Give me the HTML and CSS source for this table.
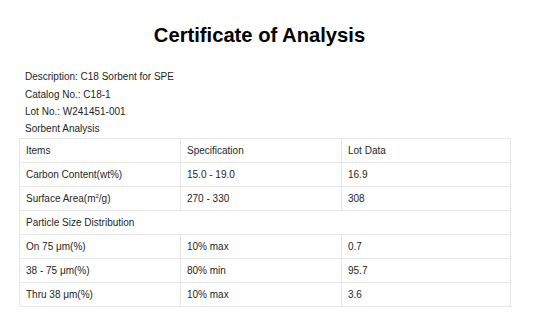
FILE: index.html
```html
<!DOCTYPE html>
<html>
<head>
<meta charset="utf-8">
<link rel="stylesheet" href="styles.css">
</head>
<body>
<div class="page">
  <h1 class="title">Certificate of Analysis</h1>
  <div class="info">
    <div class="line">Description: C18 Sorbent for SPE</div>
    <div class="line">Catalog No.: C18-1</div>
    <div class="line">Lot No.: W241451-001</div>
    <div class="line">Sorbent Analysis</div>
  </div>
  <table class="grid">
    <colgroup><col class="c1"><col class="c2"><col class="c3"></colgroup>
    <tr><td>Items</td><td>Specification</td><td>Lot Data</td></tr>
    <tr><td>Carbon Content(wt%)</td><td>15.0 - 19.0</td><td>16.9</td></tr>
    <tr><td>Surface Area(m<sup>2</sup>/g)</td><td>270 - 330</td><td>308</td></tr>
    <tr><td colspan="3">Particle Size Distribution</td></tr>
    <tr><td>On 75 μm(%)</td><td>10% max</td><td>0.7</td></tr>
    <tr><td>38 - 75 μm(%)</td><td>80% min</td><td>95.7</td></tr>
    <tr><td>Thru 38 μm(%)</td><td>10% max</td><td>3.6</td></tr>
  </table>
</div>
</body>
</html>
```
FILE: styles.css
```css
html, body {
  margin: 0;
  padding: 0;
  background: #ffffff;
}
body {
  font-family: "Liberation Sans", Arial, sans-serif;
  color: #1e1e1e;
}
.page {
  padding: 23px 0 0 19px;
  width: 491px;
}
.title {
  margin: 0;
  font-size: 20.2px;
  line-height: 24px;
  font-weight: bold;
  color: #000000;
  text-align: center;
  padding-right: 10px;
}
.info {
  margin-top: 21.4px;
  padding-left: 6px;
  font-size: 10px;
  line-height: 17.35px;
}
.grid {
  border-collapse: collapse;
  table-layout: fixed;
  width: 491px;
  font-size: 10px;
  color: #262626;
}
.c1, .c2 { width: 161px; }
.c3 { width: 169px; }
.grid td {
  border: 1px solid #e6e6e6;
  padding: 6px 6px;
  line-height: 11px;
  white-space: nowrap;
}
.grid sup {
  font-size: 6px;
  line-height: 0;
  vertical-align: 4px;
}
```
